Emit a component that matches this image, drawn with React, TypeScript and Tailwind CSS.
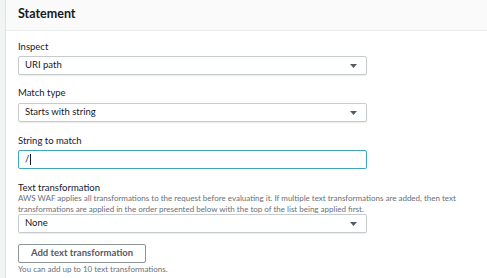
const font = { fontFamily: "Lato, 'Open Sans', sans-serif" };

function Caret() {
  return (
    <svg width="7" height="4" viewBox="0 0 7 4" className="shrink-0">
      <path d="M0 0h7L3.5 4z" fill="#545b64" />
    </svg>
  );
}

function Select({ value }: { value: string }) {
  return (
    <div className="flex h-[19px] w-[349px] items-center justify-between rounded-[2px] border border-[#c6cccd] bg-white pl-[6px] pr-[9px] shadow-[0_1px_1px_rgba(0,0,0,0.08)]">
      <span className="text-[9.5px] text-[#16191f]">{value}</span>
      <Caret />
    </div>
  );
}

function Label({ children }: { children: React.ReactNode }) {
  return <div className="h-[12px] text-[9.5px] leading-[12px] text-[#16191f]">{children}</div>;
}

export default function App() {
  return (
    <div className="flex h-[278px] w-[487px] overflow-hidden bg-[#f2f3f3]" style={font}>
      <div className="w-[5px] shrink-0" />
      <div className="flex flex-1 flex-col border-l border-[#dfe3e4] bg-white">
        <div className="flex h-[31px] shrink-0 items-center border-b border-[#eaeded] bg-[#fafafa] pl-[12px] pb-[2px]">
          <span className="text-[12.5px] font-bold text-[#16191f]">Statement</span>
        </div>
        <div className="flex flex-col pl-[12px]">
          <div className="mt-[10px]">
            <Label>Inspect</Label>
          </div>
          <div className="mt-[3px]">
            <Select value="URI path" />
          </div>
          <div className="mt-[12px]">
            <Label>Match type</Label>
          </div>
          <div className="mt-[4px]">
            <Select value="Starts with string" />
          </div>
          <div className="mt-[13px]">
            <Label>String to match</Label>
          </div>
          <div className="mt-[3px] flex h-[19px] w-[349px] items-center rounded-[2px] border-[1.5px] border-[#3fa6bd] bg-white pl-[6px]">
            <span className="text-[9.5px] text-[#16191f]">/</span>
            <span className="ml-[1px] h-[11px] w-px bg-[#16191f]" />
          </div>
          <div className="mt-[13px]">
            <div className="h-[11px] text-[9.5px] leading-[11px] text-[#16191f]">Text transformation</div>
          </div>
          <div className="w-[440px] text-[8px] leading-[10.5px] text-[#687078]">
            AWS WAF applies all transformations to the request before evaluating it. If multiple text transformations are added, then text transformations are applied in the order presented below with the top of the list being applied first.
          </div>
          <div className="mt-0">
            <Select value="None" />
          </div>
          <div className="mt-[11px] flex h-[19px] w-[128px] items-center justify-center rounded-[2px] border border-[#8d9696] bg-white">
            <span className="text-[9.5px] font-bold text-[#545b64]">Add text transformation</span>
          </div>
          <div className="mt-px text-[8px] leading-[10px] text-[#687078]">You can add up to 10 text transformations.</div>
        </div>
      </div>
    </div>
  );
}
